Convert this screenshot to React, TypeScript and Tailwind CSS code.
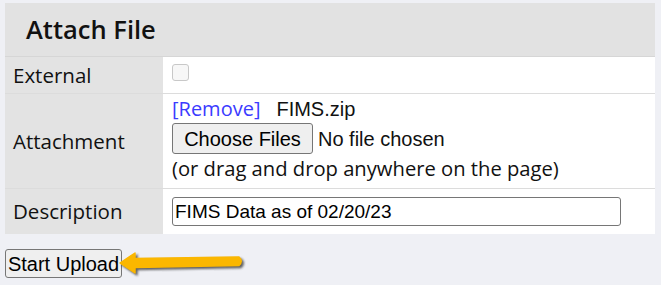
import React from 'react';

const labelFont = { fontFamily: '"Open Sans", "DejaVu Sans", sans-serif' };
const arial = { fontFamily: '"Liberation Sans", Arial, sans-serif' };

const Row: React.FC<{ label: string; h: string; children: React.ReactNode; last?: boolean }> = ({ label, h, children, last }) => (
    <div className={`grid grid-cols-[158px_1fr] ${h} ${last ? '' : 'border-b border-[#dcdcdc]'}`}>
        <div className="bg-[#e3e3e3] flex items-center pl-2 text-[20.5px] text-[#111]">{label}</div>
        <div className="bg-white pl-[9px] flex flex-col justify-center">{children}</div>
    </div>
);

export default function App() {
    return (
        <div className="w-[661px] h-[285px] bg-[#eff0f5] pt-[3px] pl-[5px] relative" style={labelFont}>
            <div className="w-[650px]">
                {/* Header */}
                <div className="h-[54px] bg-[#e2e2e2] border-b border-[#d6d6d6] flex items-center pl-[21px]">
                    <h2 className="text-[25.5px] font-semibold text-[#111]">Attach File</h2>
                </div>

                <Row label="External" h="h-[37px]">
                    <div className="w-[17px] h-[17px] rounded-[3px] border border-[#c8c8c8] bg-[#f7f7f7] -mt-[5px]" />
                </Row>

                <Row label="Attachment" h="h-[95px]">
                    <div className="flex flex-col items-start text-[#111]">
                        <div className="flex items-center h-[22px] text-[20px] -mt-[4px]">
                            <span className="text-[#3b3bff]">[Remove]</span>
                            <span className="ml-[16px]" style={arial}>FIMS.zip</span>
                        </div>
                        <div className="flex items-center mt-[3px]" style={arial}>
                            <button className="h-[31px] w-[141px] bg-[#efefef] border border-[#767676] rounded-[3px] text-[20px] text-black leading-none">
                                Choose Files
                            </button>
                            <span className="ml-[5px] text-[20px]">No file chosen</span>
                        </div>
                        <div className="mt-[2px] text-[20.2px] leading-[24px]">(or drag and drop anywhere on the page)</div>
                    </div>
                </Row>

                <Row label="Description" h="h-[45px]" last>
                    <input
                        readOnly
                        value="FIMS Data as of 02/20/23"
                        className="w-[449px] h-[29px] border border-[#767676] rounded-[3px] px-[2px] text-[19px] text-black bg-white"
                        style={arial}
                    />
                </Row>
            </div>

            {/* Upload */}
            <div className="mt-[15px] flex items-center">
                <button
                    className="h-[29px] w-[117px] bg-[#efefef] border border-[#767676] rounded-[3px] text-[20px] text-black leading-none"
                    style={arial}
                >
                    Start Upload
                </button>
            </div>

            {/* Callout arrow */}
            <svg className="absolute left-[118px] top-[248px]" width="132" height="32" viewBox="0 0 132 32">
                <defs>
                    <filter id="sh" x="-10%" y="-30%" width="130%" height="180%">
                        <feGaussianBlur stdDeviation="1" />
                    </filter>
                </defs>
                <g transform="translate(2 2)" filter="url(#sh)" opacity="0.75">
                    <path d="M2 15 L17 5 L17 10.5 L121 9 Q125.5 13 121 17.5 L17 19.5 L17 25 Z" fill="#333" stroke="#333" strokeWidth="1.5" strokeLinejoin="round" />
                </g>
                <path d="M2 15 L17 5 L17 10.5 L121 9 Q125.5 13 121 17.5 L17 19.5 L17 25 Z" fill="#fbb700" stroke="#fbb700" strokeWidth="1.5" strokeLinejoin="round" />
            </svg>
        </div>
    );
}
